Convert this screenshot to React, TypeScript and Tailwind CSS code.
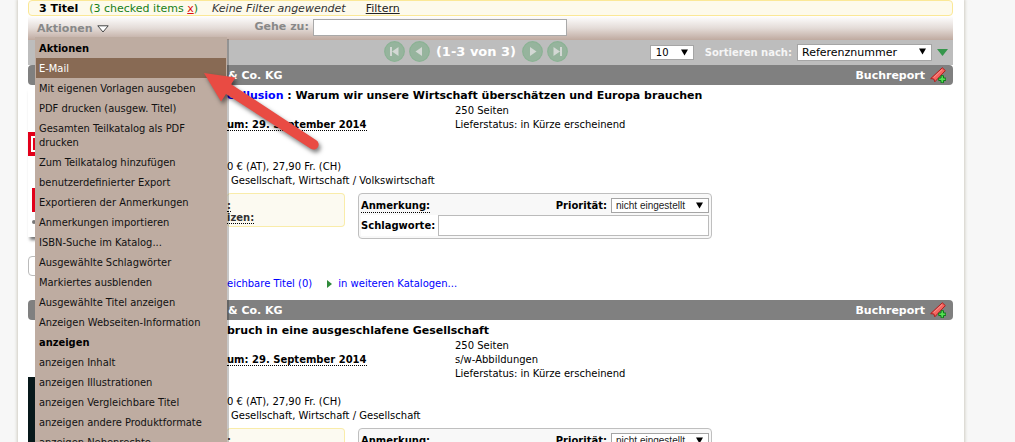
import type { ReactNode } from 'react';

interface SelectBoxProps {
    label: string;
    value: string;
    className: string;
}

interface RecordProps {
    title: ReactNode;
    details: string[];
    category: string;
    cover: ReactNode;
}

const menuItems = [
    { text: 'Aktionen', heading: true },
    { text: 'E-Mail', active: true },
    { text: 'Mit eigenen Vorlagen ausgeben' },
    { text: 'PDF drucken (ausgew. Titel)' },
    { text: 'Gesamten Teilkatalog als PDF drucken' },
    { text: 'Zum Teilkatalog hinzufügen' },
    { text: 'benutzerdefinierter Export' },
    { text: 'Exportieren der Anmerkungen' },
    { text: 'Anmerkungen importieren' },
    { text: 'ISBN-Suche im Katalog...' },
    { text: 'Ausgewählte Schlagwörter' },
    { text: 'Markiertes ausblenden' },
    { text: 'Ausgewählte Titel anzeigen' },
    { text: 'Anzeigen Webseiten-Information' },
    { text: 'anzeigen', heading: true },
    { text: 'anzeigen Inhalt' },
    { text: 'anzeigen Illustrationen' },
    { text: 'anzeigen Vergleichbare Titel' },
    { text: 'anzeigen andere Produktformate' },
    { text: 'anzeigen Nebenrechte' },
];

const SelectBox = ({ label, value, className }: SelectBoxProps) => (
    <span className="relative inline-flex">
        <select aria-label={label} className={`appearance-none border border-[#a5a5a5] bg-white ${className}`}>
            <option>{value}</option>
        </select>
        <svg className="pointer-events-none absolute right-1.5 top-1 h-[7px] w-[7px]" viewBox="0 0 7 7">
            <path d="M0 0.5h7L3.5 6.5z" fill="#000" />
        </svg>
    </span>
);

const PagerButton = ({ label, path }: { label: string; path: string }) => (
    <button type="button" aria-label={label} className="h-[21px] w-[21px]">
        <svg viewBox="0 0 21 21" className="h-full w-full">
            <circle cx="10.5" cy="10.5" r="9.8" fill="#96b49d" stroke="#8bb294" strokeWidth="1.2" />
            <path d={path} fill="#d3d8d4" />
        </svg>
    </button>
);

const BookmarkIcon = () => (
    <svg viewBox="0 0 16 16" className="h-4 w-4">
        <path d="M12.3 0.8L15.3 3.6L4.8 14.8L3.8 12L0.7 11.6z" fill="#f4645f" stroke="#b01c1c" strokeWidth="1" />
        <path d="M12 2.6L3.6 10.6" stroke="#fb9b95" strokeWidth="1" />
        <path d="M11 8.7h2.5v2.3h2.3v2.5h-2.3v2.3H11v-2.3H8.7V11H11z" fill="#53e052" stroke="#0d7a1a" strokeWidth="1" />
    </svg>
);

const Record = ({ title, details, category, cover }: RecordProps) => (
    <article>
        <header className="flex h-5 items-center rounded bg-[#808080] pl-[200px] pr-[7px] text-[11px] font-bold text-white">
            <span className="pt-0.5">&amp; Co. KG</span>
            <span className="ml-auto pt-0.5">Buchreport</span>
            <button type="button" aria-label="Merken" className="ml-[5px]">
                <BookmarkIcon />
            </button>
        </header>
        <div className="flex h-[215px]">
            <div className="w-[199px] shrink-0 pt-1">{cover}</div>
            <div className="min-w-0 flex-1 text-[10px] leading-[14px]">
                <h2 className="pb-px pt-[3px] text-[11px] font-bold leading-[15px]">{title}</h2>
                <div className="flex h-14">
                    <div className="w-[228px] pt-[14px] font-bold">
                        <span className="border-b border-dotted border-black">um: 29. September 2014</span>
                    </div>
                    <div>
                        {details.map((line) => (
                            <p key={line}>{line}</p>
                        ))}
                    </div>
                </div>
                <p>0 € (AT), 27,90 Fr. (CH)</p>
                <p className="pl-1">{category}</p>
                <div className="flex items-start gap-[13px] pt-[5px]">
                    <div className="h-[34px] w-[118px] rounded border border-l-0 border-[#f9ecaa] bg-[#fcfaf1] pt-1.5 font-bold leading-3 text-[#333]">
                        <p><span className="border-b border-dotted border-black">:</span></p>
                        <p><span className="border-b border-dotted border-black">izen:</span></p>
                    </div>
                    <div className="h-[46px] w-[354px] rounded border border-[#bfbfbf] bg-[#f8f8f8] px-0.5 pt-1 font-bold">
                        <div className="flex h-[15px] items-center">
                            <span className="border-b border-dotted border-black leading-[13px]">Anmerkung:</span>
                            <span className="ml-auto mr-1">Priorität:</span>
                            <SelectBox
                                label="Priorität"
                                value="nicht eingestellt"
                                className="h-[15px] w-[98px] pl-1 font-['Liberation_Sans',Arial,sans-serif] text-[10px] font-normal leading-[13px] text-[#222]"
                            />
                        </div>
                        <label className="mt-0.5 flex h-[21px] items-center gap-[3px] bg-white">
                            Schlagworte:
                            <input type="text" className="h-[21px] min-w-0 flex-1 border border-[#bbb] bg-white px-1 font-normal" />
                        </label>
                    </div>
                </div>
                <div className="flex items-center pt-[38px] text-[#0000ff]">
                    <a href="#vergleichbar">eichbare Titel (0)</a>
                    <svg viewBox="0 0 5 8" className="ml-[15px] mr-1.5 h-2 w-[5px]">
                        <path d="M0 0l5 4-5 4z" fill="#2f8a3a" />
                    </svg>
                    <a href="#kataloge">in weiteren Katalogen...</a>
                </div>
            </div>
        </div>
    </article>
);

const ActionMenu = () => (
    <ul className="absolute left-[7px] top-[21px] z-10 w-48 bg-[#beaca1] pt-px font-['DejaVu_Sans_Condensed','DejaVu_Sans',sans-serif] text-[11px] font-normal leading-[14px] shadow-[2px_2px_0_rgba(0,0,0,0.22)]">
        {menuItems.map((item) => (
            <li key={item.text} className={item.active ? 'mx-px bg-[#886a54] text-white' : 'mx-px text-[#111]'}>
                {item.heading ? (
                    <span className="block px-[3px] pb-0.5 pt-1 font-bold text-black">{item.text}</span>
                ) : (
                    <button type="button" className="block w-full pb-0.5 pl-[3px] pr-4 pt-1 text-left">{item.text}</button>
                )}
            </li>
        ))}
    </ul>
);

const App = () => {
    return (
        <div className="h-screen overflow-hidden bg-[#f7f7f7] font-[Verdana,'DejaVu_Sans',sans-serif] text-black">
            <main className="relative ml-[18px] mr-[51px] min-h-full bg-white pl-2.5 pr-[11px] shadow-[0_0_3px_1px_#cfccc2]">
                <div className="flex h-4 items-center whitespace-pre rounded border border-[#fbe896] bg-[#fdfaeb] pl-2.5 pt-0.5 text-[11px]">
                    <b>3 Titel</b>
                    <span className="ml-[11px] text-[#178017]">
                        (3 checked items <a href="#clear" className="text-[#e01010] underline">x</a>)
                    </span>
                    <i className="ml-3.5 text-[#333]">Keine Filter angewendet</i>
                    <a href="#filtern" className="ml-5 text-[#222] underline">Filtern</a>
                </div>

                {/* Toolbar */}
                <div className="relative flex h-6 items-center bg-linear-to-b from-white via-[#e4dcd8] to-[#bfaaa0] text-[11px] font-bold text-[#888]">
                    <button type="button" className="ml-[9px] flex items-center gap-1 pt-0.5">
                        Aktionen
                        <svg viewBox="0 0 12 8" className="h-2 w-3">
                            <path d="M0.8 0.8h10.4L6 7z" fill="#fff" stroke="#444" strokeWidth="1" />
                        </svg>
                    </button>
                    <label className="ml-[146px] flex items-center gap-1 pb-px">
                        Gehe zu:
                        <input type="text" className="h-[17px] w-[254px] border border-[#a9a9a9] bg-white px-1 font-normal text-black" />
                    </label>
                    <ActionMenu />
                </div>

                {/* Pager */}
                <div className="flex h-[25px] items-center bg-[#bdbdbd] pl-[356px] pr-[5px] text-white">
                    <nav className="flex items-center gap-1 pb-0.5" aria-label="Seiten">
                        <PagerButton label="Erste Seite" path="M6 6h2v9H6zM14.5 6v9L8 10.5z" />
                        <PagerButton label="Vorige Seite" path="M13 6v9L6.5 10.5z" />
                        <b className="w-[84px] whitespace-nowrap text-center text-[13px] leading-5">(1-3 von 3)</b>
                        <PagerButton label="Nächste Seite" path="M8 6v9l6.5-4.5z" />
                        <PagerButton label="Letzte Seite" path="M13 6h2v9h-2zM6.5 6v9l6.5-4.5z" />
                    </nav>
                    <div className="ml-auto flex items-center text-[10px]">
                        <SelectBox label="Einträge pro Seite" value="10" className="h-[15px] w-11 pl-[5px] text-[10px] leading-[13px] text-black" />
                        <b className="ml-[11px] mr-[5px] text-[#f5f5f5]">Sortieren nach:</b>
                        <SelectBox label="Sortieren nach" value="Referenznummer" className="h-[17px] w-[135px] pl-1 text-[11px] leading-[15px] text-black" />
                        <button type="button" aria-label="Absteigend" className="ml-[5px]">
                            <svg viewBox="0 0 11 7" className="h-[7px] w-[11px]">
                                <path d="M0 0h11L5.5 7z" fill="#36964c" />
                            </svg>
                        </button>
                    </div>
                </div>

                <Record
                    title={<><a href="#titel" className="text-[#0000ff]">e Illusion</a> : Warum wir unsere Wirtschaft überschätzen und Europa brauchen</>}
                    details={['250 Seiten', 'Lieferstatus: in Kürze erscheinend']}
                    category="Gesellschaft, Wirtschaft / Volkswirtschaft"
                    cover={
                        <>
                            <div className="flex h-[148px] w-24 flex-col bg-white pt-[43px] shadow-[2px_3px_3px_#777]">
                                <div className="h-6 bg-[#e2001a] py-1 pl-[3px]">
                                    <div className="h-4 w-4 border-2 border-white" />
                                </div>
                                <div className="ml-1 mt-8 h-6 bg-[#e2001a]" />
                                <div className="ml-1 mt-2 h-1 w-1 rounded-full bg-[#777]" />
                            </div>
                            <div className="mt-[19px] h-5 w-24 rounded border border-[#bbb] bg-white" />
                        </>
                    }
                />
                <Record
                    title="bruch in eine ausgeschlafene Gesellschaft"
                    details={['250 Seiten', 's/w-Abbildungen', 'Lieferstatus: in Kürze erscheinend']}
                    category="Gesellschaft, Wirtschaft / Gesellschaft"
                    cover={
                        <div className="h-[150px] w-24 pt-[53px]">
                            <div className="h-full bg-[#07181a]" />
                        </div>
                    }
                />

                {/* Pointer arrow over the menu */}
                <svg className="pointer-events-none absolute left-[182px] top-[66px] z-20 h-[90px] w-[125px] drop-shadow-[2px_3px_2px_rgba(0,0,0,0.5)]" viewBox="0 0 125 90">
                    <path d="M4 7L35.5 11.5L31.2 18.2L116.3 74.2A5 5 0 0 1 110.8 82.8L26 28L21 35.5z" fill="#e94b43" />
                </svg>
            </main>
        </div>
    );
};

export default App;
